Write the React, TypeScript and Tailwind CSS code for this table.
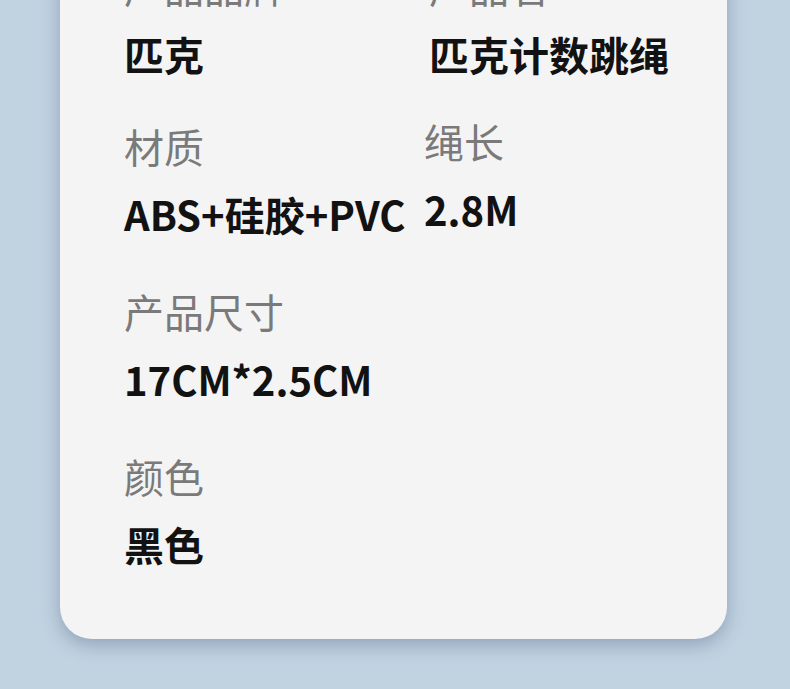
const rows = {
  left: [
    { label: "产品品牌", value: "匹克" },
    { label: "材质", value: "ABS+硅胶+PVC" },
    { label: "产品尺寸", value: "17CM*2.5CM" },
    { label: "颜色", value: "黑色" },
  ],
  right: [
    { label: "产品名", value: "匹克计数跳绳" },
    { label: "绳长", value: "2.8M" },
  ],
};

function Spec({
  label,
  value,
  className = "",
}: {
  label: string;
  value: string;
  className?: string;
}) {
  return (
    <div className={className}>
      <div className="text-[40px] leading-[48px] font-normal text-[#7a7a7a] whitespace-nowrap">
        {label}
      </div>
      <div className="mt-[20px] text-[40px] leading-[48px] font-bold text-[#121212] whitespace-nowrap">
        {value}
      </div>
    </div>
  );
}

export default function App() {
  return (
    <div className="h-[689px] w-full overflow-hidden bg-[#c1d2e1] font-['Noto_Sans_CJK_SC',sans-serif]">
      <div className="-mt-[78px] ml-[60px] w-[667px] rounded-b-[32px] bg-[#f4f4f4] pt-[40px] pb-[71px] pl-[64px] shadow-[0_6px_18px_rgba(70,95,125,0.4)]">
        <div className="flex">
          {/* left column */}
          <div className="flex w-[300px] flex-col">
            <Spec {...rows.left[0]} />
            <Spec {...rows.left[1]} className="mt-[44px]" />
            <Spec {...rows.left[2]} className="mt-[49px]" />
            <Spec {...rows.left[3]} className="mt-[49px]" />
          </div>

          {/* right column */}
          <div className="flex flex-col">
            <Spec {...rows.right[0]} className="ml-[5px]" />
            <Spec {...rows.right[1]} className="mt-[39px]" />
          </div>
        </div>
      </div>
    </div>
  );
}
